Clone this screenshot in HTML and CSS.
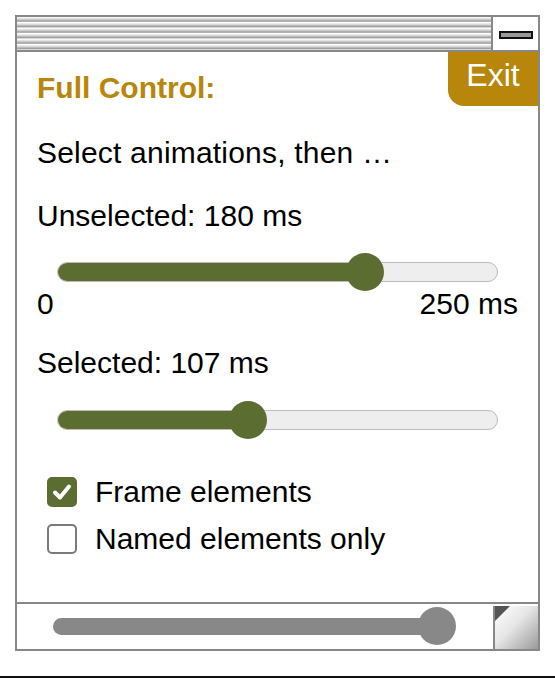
FILE: index.html
```html
<!DOCTYPE html>
<html>
<head>
<meta charset="utf-8">
<link rel="stylesheet" href="styles.css">
</head>
<body>
<div class="window">
  <div class="titlebar">
    <div class="stripes"></div>
    <div class="minbox"><span class="minicon"></span></div>
  </div>
  <div class="content">
    <div class="exit">Exit</div>
    <div class="heading">Full Control:</div>
    <div class="line l1">Select animations, then …</div>
    <div class="line l2">Unselected: 180 ms</div>
    <div class="slider s1">
      <div class="track"><div class="fill" style="width: 310px"></div></div>
      <div class="thumb" style="left: 289px"></div>
    </div>
    <div class="scale"><span>0</span><span>250 ms</span></div>
    <div class="line l3">Selected: 107 ms</div>
    <div class="slider s2">
      <div class="track"><div class="fill" style="width: 191px"></div></div>
      <div class="thumb" style="left: 172px"></div>
    </div>
    <div class="checks">
      <div class="check"><span class="box on"><svg viewBox="0 0 28 28" width="28" height="28"><path d="M7 14.5 L12 19.5 L21 8.5" fill="none" stroke="#fff" stroke-width="4" stroke-linecap="round" stroke-linejoin="round"/></svg></span>Frame elements</div>
      <div class="check"><span class="box"></span>Named elements only</div>
    </div>
  </div>
  <div class="bottombar">
    <div class="hscroll">
      <div class="htrack"></div>
      <div class="hthumb"></div>
    </div>
    <div class="resize"><span class="fold"></span></div>
  </div>
</div>
<div class="rule"></div>
</body>
</html>
```
FILE: styles.css
```css
* { box-sizing: border-box; }
html, body { margin: 0; padding: 0; background: #fff; }
body {
  font-family: "Liberation Sans", Arial, sans-serif;
  color: #000;
  width: 555px;
  height: 678px;
  position: relative;
}
.window {
  margin: 15px 0 0 15px;
  width: 525px;
  display: flex;
  flex-direction: column;
}
.titlebar {
  height: 35px;
  display: flex;
  border: 2px solid #888;
  border-bottom: none;
}
.stripes {
  flex: 1;
  background: repeating-linear-gradient(to bottom, #ffffff 0px, #d8d8d8 2px, #9a9a9a 4.2px, #ffffff 5.5px);
  border-right: 2px solid #888;
}
.minbox {
  width: 45px;
  display: flex;
  align-items: center;
  justify-content: center;
  background: #fff;
}
.minicon {
  width: 34px;
  height: 8px;
  border: 2px solid #111;
  background: #9a9a9a;
  margin-top: 2px;
}
.content {
  position: relative;
  border: 2px solid #888;
  height: 554px;
  padding: 18px 20px 0 20px;
}
.exit {
  position: absolute;
  top: 0;
  right: 0;
  width: 90px;
  height: 54px;
  background: #b8860b;
  color: #fff;
  font-size: 32px;
  border-bottom-left-radius: 16px;
  text-align: center;
  line-height: 46px;
}
.heading {
  color: #b8860b;
  font-weight: bold;
  font-size: 30px;
  height: 36px;
  line-height: 36px;
}
.line {
  font-size: 30px;
  height: 36px;
  line-height: 36px;
}
.l1 { margin-top: 29px; letter-spacing: 0.2px; }
.l2 { margin-top: 27px; }
.l3 { margin-top: 26px; }
.slider {
  position: relative;
  height: 40px;
  margin: 0 20px;
  display: flex;
  align-items: center;
}
.s1 { margin-top: 18px; }
.s2 { margin-top: 19px; }
.track {
  width: 100%;
  height: 20px;
  border-radius: 10px;
  background: #eeeeee;
  border: 1.5px solid #bbbbbb;
  overflow: hidden;
}
.fill {
  height: 100%;
  background: #5b6d31;
}
.thumb {
  position: absolute;
  top: 1px;
  width: 38px;
  height: 38px;
  border-radius: 50%;
  background: #5b6d31;
}
.scale {
  display: flex;
  justify-content: space-between;
  font-size: 30px;
  height: 30px;
  line-height: 30px;
  margin-top: -3px;
}
.checks {
  margin-top: 28px;
  padding-left: 10px;
}
.check {
  display: flex;
  align-items: center;
  gap: 18px;
  font-size: 30px;
  height: 47px;
}
.box {
  width: 30px;
  height: 30px;
  border: 2.5px solid #7a7a7a;
  border-radius: 5px;
  display: flex;
  align-items: center;
  justify-content: center;
  background: #fff;
  flex: none;
}
.box.on {
  background: #5b6d31;
  border-color: #5b6d31;
}
.box svg { display: block; flex: none; }
.bottombar {
  height: 47px;
  display: flex;
  border: 2px solid #888;
  border-top: none;
}
.hscroll {
  flex: 1;
  position: relative;
  display: flex;
  align-items: center;
  padding-left: 36px;
}
.htrack {
  width: 402px;
  height: 17px;
  border-radius: 9px;
  background: #888;
}
.hthumb {
  position: absolute;
  left: 401px;
  top: 3px;
  width: 38px;
  height: 38px;
  border-radius: 50%;
  background: #888;
}
.resize {
  width: 45px;
  position: relative;
  border-left: 2px solid #888;
  margin-top: 2px;
  background: linear-gradient(135deg, #ffffff 0%, #e6e6e6 45%, #9a9a9a 100%);
}
.fold {
  position: absolute;
  left: 0;
  top: 0;
  width: 0;
  height: 0;
  border-top: 15px solid #555;
  border-right: 15px solid transparent;
}
.rule {
  position: absolute;
  left: 0;
  right: 0;
  top: 676px;
  height: 2px;
  background: #111;
}
```
